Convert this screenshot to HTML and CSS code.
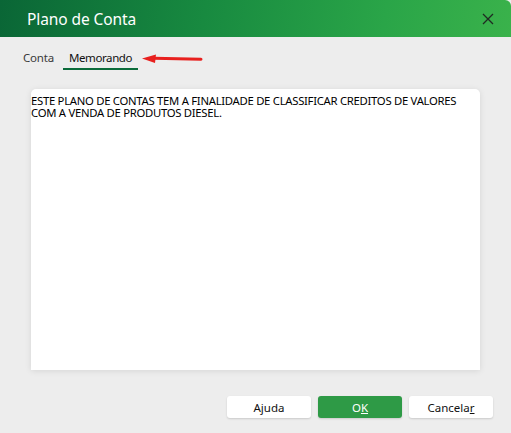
FILE: index.html
```html
<!DOCTYPE html>
<html>
<head>
<meta charset="utf-8">
<link rel="stylesheet" href="styles.css">
</head>
<body>
<div class="dialog">
  <header class="titlebar">
    <span class="title">Plano de Conta</span>
    <svg class="close" width="12" height="12" viewBox="0 0 12 12"><path d="M1 1 L11 11 M11 1 L1 11" stroke="#1f2a22" stroke-width="1.3" fill="none"/></svg>
  </header>
  <nav class="tabs">
    <span class="tab">Conta</span>
    <span class="tab active">Memorando</span>
    <svg class="arrow" width="62" height="12" viewBox="0 0 62 12"><path d="M12 5.2 L59 6.2" stroke="#e8201e" stroke-width="3" stroke-linecap="round"/><path d="M0 5.5 L14 1.5 L13 10 Z" fill="#e8201e"/></svg>
  </nav>
  <section class="memo">
    <p>ESTE PLANO DE CONTAS TEM A FINALIDADE DE CLASSIFICAR CREDITOS DE VALORES COM A VENDA DE PRODUTOS DIESEL.</p>
  </section>
  <footer class="buttons">
    <button class="btn">Ajuda</button>
    <button class="btn primary">O<u>K</u></button>
    <button class="btn">Cancela<u>r</u></button>
  </footer>
</div>
</body>
</html>
```
FILE: styles.css
```css
html, body {
  margin: 0;
  padding: 0;
  background: #ededed;
}
.dialog {
  width: 511px;
  height: 433px;
  display: flex;
  flex-direction: column;
  font-family: "Noto Sans", "Liberation Sans", sans-serif;
  background: #ededed;
}
.titlebar {
  height: 37px;
  flex: none;
  display: flex;
  align-items: center;
  justify-content: space-between;
  padding: 0 17px 0 27px;
  background: linear-gradient(100deg, #0a6636 0%, #188a40 40%, #2aa548 75%, #3ab24b 100%);
  border-top-right-radius: 6px;
}
.title {
  color: #fff;
  font-size: 15.5px;
  letter-spacing: -0.1px;
}
.close {
  display: block;
}
.tabs {
  height: 42px;
  flex: none;
  display: flex;
  align-items: flex-start;
  padding: 13px 0 0 23px;
  box-sizing: border-box;
}
.tab {
  font-size: 11.5px;
  color: #3a3a3a;
  line-height: 16px;
  padding-bottom: 2px;
  letter-spacing: -0.2px;
}
.tab.active {
  margin-left: 9px;
  padding: 0 6px 2px;
  color: #111;
  letter-spacing: -0.4px;
  border-bottom: 2px solid #0b6b3a;
}
.arrow {
  margin-left: 4px;
  margin-top: 3px;
}
.memo {
  margin: 10px 31px 0 31px;
  height: 281px;
  background: #fff;
  border-radius: 5px 5px 0 0;
  box-shadow: 0 1px 6px rgba(0,0,0,0.10);
  padding-top: 6px;
  box-sizing: border-box;
}
.memo p {
  margin: 0;
  font-size: 11.3px;
  line-height: 12px;
  color: #000;
  letter-spacing: -0.28px;
}
.buttons {
  display: flex;
  justify-content: flex-end;
  gap: 7px;
  padding: 26px 18px 0 0;
}
.btn {
  width: 84px;
  height: 22px;
  border: none;
  border-radius: 3px;
  background: #fff;
  box-shadow: 0 1px 2px rgba(0,0,0,0.15);
  font-family: "Noto Sans", "Liberation Sans", sans-serif;
  font-size: 11.5px;
  color: #111;
  padding: 0;
}
.btn.primary {
  background: #2e9a46;
  color: #fff;
}
```
